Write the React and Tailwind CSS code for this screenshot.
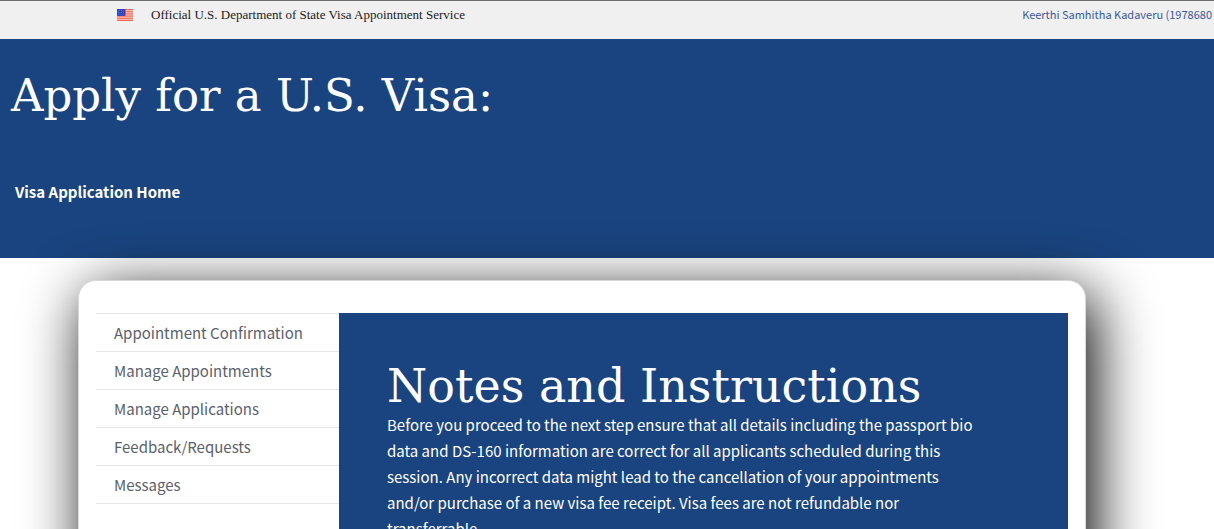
const NAV_ITEMS = [
  'Appointment Confirmation',
  'Manage Appointments',
  'Manage Applications',
  'Feedback/Requests',
  'Messages',
];

const STRIPES = [0, 2, 4, 6, 8, 10, 12];

function FlagIcon() {
  return (
    <svg className="h-3 w-4 shrink-0" viewBox="0 0 19 13" preserveAspectRatio="none" role="img" aria-label="U.S. flag">
      <rect width="19" height="13" fill="#fbcabd" />
      {STRIPES.map((y) => (
        <rect key={y} y={y} width="19" height="1" fill="#f0604c" />
      ))}
      <rect width="10" height="7.5" fill="#2b41bd" />
      {[1.5, 3.5, 5.5].map((y) =>
        [1.5, 3.5, 5.5, 7.5].map((x) => <circle key={`${x}-${y}`} cx={x} cy={y} r="0.45" fill="#a9b6ee" />)
      )}
    </svg>
  );
}

function TopBar() {
  return (
    <header className="flex h-[39px] items-start justify-between overflow-hidden border-t border-[#6f6d70] bg-[#f0f0f0] pl-[117px] pt-1">
      <div className="flex items-center gap-[18px]">
        <FlagIcon />
        <span className="whitespace-nowrap font-['Liberation_Serif',serif] text-[13px] leading-5 text-[#1b1b1b]">
          Official U.S. Department of State Visa Appointment Service
        </span>
      </div>
      <a href="#account" className="whitespace-nowrap pr-[2px] text-[11px] leading-[18px] text-[#3b5998]">
        Keerthi Samhitha Kadaveru (1978680
      </a>
    </header>
  );
}

function Hero() {
  return (
    <section className="h-[219px] bg-[#1a447f] pl-[11px] pt-[25px] text-white">
      <h1 className="font-['DejaVu_Serif',serif] text-[45px] leading-[64px]">
        Apply for a U.S. Visa:
      </h1>
      <a href="#home" className="mt-[51px] ml-1 inline-block text-[15px] font-bold leading-[26px]">
        Visa Application Home
      </a>
    </section>
  );
}

function SideNav() {
  return (
    <nav className="w-[243px] shrink-0">
      <ul className="border-t border-[#e6e7e8]">
        {NAV_ITEMS.map((item) => (
          <li key={item} className="border-b border-[#e6e7e8]">
            <a href="#section" className="block px-[18px] py-[6px] text-[15px] leading-[25px] text-[#5b616b]">
              {item}
            </a>
          </li>
        ))}
      </ul>
    </nav>
  );
}

export default function App() {
  return (
    <div className="h-screen overflow-hidden bg-white font-['Noto_Sans_CJK_SC',sans-serif]">
      <TopBar />
      <Hero />
      <main className="mt-[22px] mr-[128px] ml-[78px] flex min-h-[600px] rounded-[18px] border border-[#d8d8d8] bg-white px-[17px] pt-8 shadow-[8px_14px_60px_#000000]">
        <SideNav />
        <article className="flex-1 bg-[#1a447f] px-12 pt-12 text-white">
          <h2 className="whitespace-nowrap font-['DejaVu_Serif',serif] text-[46px] leading-[51px]">
            Notes and Instructions
          </h2>
          <p className="max-w-[600px] text-[15px] leading-[26px]">
            Before you proceed to the next step ensure that all details including the passport bio data and DS-160
            information are correct for all applicants scheduled during this session. Any incorrect data might lead to
            the cancellation of your appointments and/or purchase of a new visa fee receipt. Visa fees are not
            refundable nor transferrable.
          </p>
        </article>
      </main>
    </div>
  );
}
